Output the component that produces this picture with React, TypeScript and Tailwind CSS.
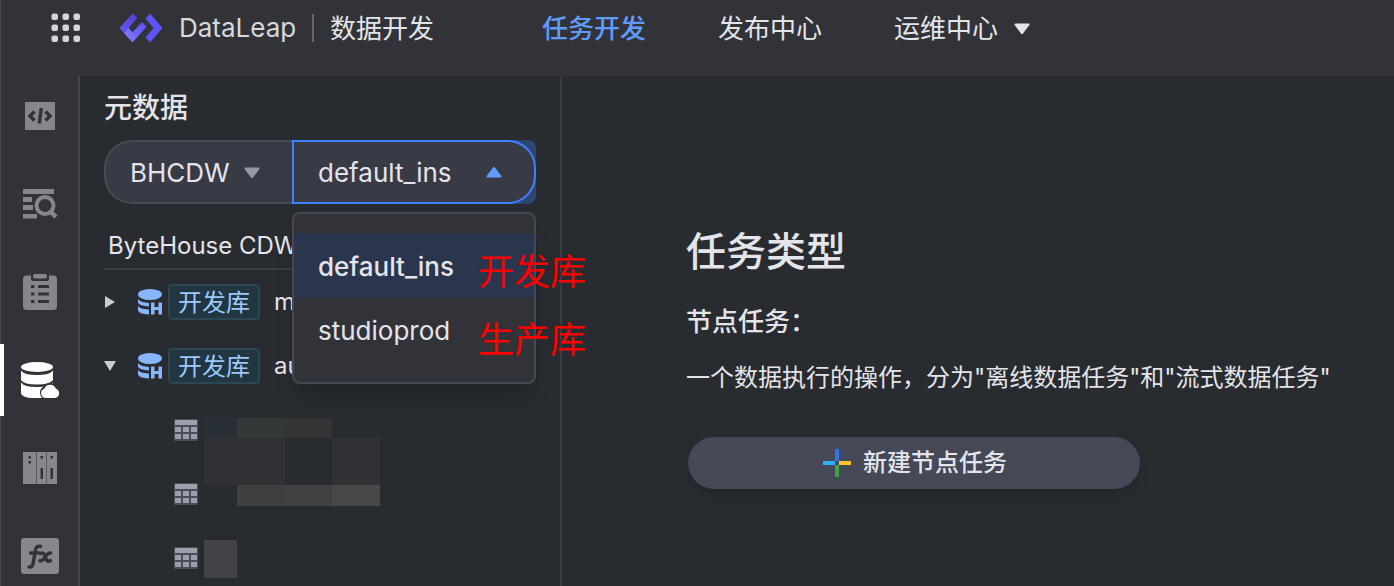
import { useState } from "react"

const AppsIcon = () => (
  <svg width="30" height="30" viewBox="0 0 30 30" fill="#d5d6da">
    {[0, 11, 22].map((y) => [0, 11, 22].map((x) => <rect key={`${x}-${y}`} x={x + 0.5} y={y + 0.5} width="6.5" height="6.5" rx="2" />))}
  </svg>
)

const Logo = () => (
  <svg width="44" height="30" viewBox="0 0 44 30">
    <defs>
      <linearGradient id="logoTop" x1="0" y1="1" x2="1" y2="0">
        <stop offset="0" stopColor="#6558f5" />
        <stop offset="1" stopColor="#5043d2" />
      </linearGradient>
      <linearGradient id="logoBottom" x1="0" y1="1" x2="1" y2="0">
        <stop offset="0" stopColor="#8c83fa" />
        <stop offset="0.5" stopColor="#6f64fa" />
        <stop offset="1" stopColor="#5b4bf5" />
      </linearGradient>
    </defs>
    <path d="M0.5 15 13.5 0.5 18.5 5 9.5 15 13.5 19.5 9 24.5Z" fill="url(#logoTop)" />
    <path d="M5 20 9.3 14.8 13.5 19.3 23 9 27.5 13.8 13.5 29.5Z" fill="url(#logoBottom)" />
    <path d="M31 0.5 43.5 15 31 29.5 26.5 24.5 34.5 15 26.5 5.5Z" fill="#6052f9" />
  </svg>
)

const Caret = ({ className = "" }) => (
  <svg width="16" height="12" viewBox="0 0 16 12" className={className} fill="currentColor">
    <path d="M1.5 0.5h13c1 0 1.3 1 .7 1.7L9 10.6c-.5.7-1.5.7-2 0L.8 2.2C.2 1.5.5.5 1.5.5Z" />
  </svg>
)

const CodeIcon = () => (
  <svg width="40" height="40" viewBox="0 0 40 40">
    <path d="M5 6h30v28H5z" fill="#86878b" />
    <path d="M14.5 15.5 10 20l4.500 4.500M25.500 15.500l4.500 4.500-4.500 4.500" fill="none" stroke="#323338" strokeWidth="3.500" />
    <path d="M21.300 12 19.300 27.500" stroke="#323338" strokeWidth="3.500" />
  </svg>
)

const SearchListIcon = () => (
  <svg width="40" height="40" viewBox="0 0 40 40">
    <path d="M3 5h31v5H3zM3 13h9v5H3zM3 21h10v5H3zM3 30h14v4.500H3z" fill="#86878b" />
    <circle cx="25" cy="21.500" r="8.500" fill="none" stroke="#86878b" strokeWidth="4" />
    <path d="m30.500 27.500 5.500 5.500" stroke="#86878b" strokeWidth="4.500" />
  </svg>
)

const ClipboardIcon = () => (
  <svg width="40" height="40" viewBox="0 0 40 40">
    <rect x="3" y="3.500" width="34" height="34.500" rx="4" fill="#86878b" />
    <path d="M11 2h18v5q0 2-3 2H14q-3 0-3-2Z" fill="#323338" />
    <rect x="13" y="2" width="14" height="4.500" rx="2" fill="#86878b" />
    <path d="M11 13h3.500v3H11zM18 13h11v3H18zM11 20.500h3.500v3H11zM18 20.500h11v3H18zM11 28h3.500v3H11zM18 28h11v3H18z" fill="#323338" />
  </svg>
)

const DatabaseIcon = () => (
  <svg width="40" height="40" viewBox="0 0 40 40">
    <ellipse cx="17" cy="7" rx="16" ry="5" fill="#fff" />
    <path d="M1 10.500q3 4.500 16 4.500t16-4.500V20q-3 4.500-16 4.500T1 20Z" fill="#fff" />
    <path d="M1 22.500Q4 27 17 27t16-4.500V38H10Q1 36.500 1 33Z" fill="#fff" />
    <path d="M25.500 38a5.600 5.600 0 0 1-1.500-10 7 7 0 0 1 12 0 5.600 5.600 0 0 1-1 10Z" fill="#fff" stroke="#323338" strokeWidth="3" />
    <path d="M25.500 38a4.800 4.800 0 0 1-1.200-9.300 6.200 6.200 0 0 1 11.600 0 4.800 4.800 0 0 1-1 9.300Z" fill="#fff" />
    <path d="M1 38h38v2H1z" fill="#323338" />
  </svg>
)

const BinderIcon = () => (
  <svg width="40" height="40" viewBox="0 0 40 40">
    <path d="M3 4h34v32H3z" fill="#86878b" />
    <path d="M16.500 4v32M26.500 4v32" stroke="#5b5c60" />
    <path d="M8.500 8h2.500v2.500H8.500zM8.500 13h2.500v2.500H8.500zM20.500 8h2.500v2.500h-2.500zM30.500 8h2.500v2.500h-2.500zM20.500 20h2.500v11h-2.500zM30.500 20h2.500v11h-2.500z" fill="#323338" />
  </svg>
)

const FunctionIcon = () => (
  <svg width="40" height="40" viewBox="0 0 40 40">
    <rect x="1" y="2" width="38" height="36" rx="3" fill="#86878b" />
    <g fill="none" stroke="#323338" strokeWidth="3.500" strokeLinecap="round">
      <path d="M20.500 10.500q-4-1.500-5 3.500l-2.300 13q-.8 4.500-4.200 4M10.500 17h8.500" />
      <path d="M20.500 17.500q3-1.500 4.500 2.500l1 3q1.500 3.500 4.500 1.500M30.500 17q-2-.5-4.500 3l-2 2.500q-2 2.800-4 2.300" />
    </g>
  </svg>
)

const DbHIcon = () => (
  <svg width="26" height="26" viewBox="0 0 26 26" fill="#86b4ff">
    <ellipse cx="13" cy="5.500" rx="12" ry="5.500" />
    <path d="M1 10q2 3.500 11 4v3.500Q2 17 1 13.500ZM1 17q2 3 11 3.500V25.500Q2 25 1 21.500Z" />
    <path d="M14 13.500h3.500V18h4v-4.500H25v12h-3.500V21h-4v4.500H14z" />
  </svg>
)

const TableIcon = () => (
  <svg width="24" height="22" viewBox="0 0 24 22">
    <rect width="24" height="22" rx="1" fill="#484c57" />
    <path d="M1 1h22v5H1zM1 8h6v5H1zM9 8h6v5H9zM17 8h6v5h-6zM1 15h6v5H1zM9 15h6v5H9zM17 15h6v5h-6z" fill="#9aa0ae" />
  </svg>
)

const sideItems = [
  { label: "代码", icon: <CodeIcon /> },
  { label: "查询", icon: <SearchListIcon /> },
  { label: "任务", icon: <ClipboardIcon /> },
  { label: "元数据", icon: <DatabaseIcon />, active: true },
  { label: "资源", icon: <BinderIcon /> },
  { label: "函数", icon: <FunctionIcon /> },
]

const databases = [
  { name: "m", open: false },
  { name: "au", open: true },
]

const instances = ["default_ins", "studioprod"]

const maskColors = [
  "bg-[#272e35]", "bg-[#353839]", "bg-[#333436]", "bg-transparent",
  "bg-[#303134]", "bg-[#303134]", "bg-transparent", "bg-[#313235]",
  "bg-transparent", "bg-[#3f4042]", "bg-[#404143]", "bg-[#47484a]",
]

const Header = () => (
  <header className="flex h-19 shrink-0 items-center border-l border-[#46474b] bg-[#323338] pb-5 pl-[50px] text-[26px] leading-9 whitespace-nowrap text-[#e4e5ea]">
    <button aria-label="应用"><AppsIcon /></button>
    <div className="ml-[38px] flex items-center">
      <Logo />
      <span className="ml-4 w-[133px] text-[#d8d9dd]">DataLeap</span>
      <span className="h-7 w-0.5 bg-[#66676b]" />
      <span className="ml-4 pt-0.5">数据开发</span>
    </div>
    <nav className="ml-27 flex items-center gap-18 pt-0.5">
      <a href="#develop" className="font-medium text-[#619bff]">任务开发</a>
      <a href="#release">发布中心</a>
      <a href="#ops" className="flex items-center gap-4">
        运维中心
        <Caret />
      </a>
    </nav>
  </header>
)

const Sidebar = () => (
  <nav className="flex w-20 shrink-0 flex-col gap-4 border-r-2 border-[#45464a] bg-[#323338] pt-1 shadow-[inset_1px_0_0_#46474b]">
    {sideItems.map((item) => (
      <button
        key={item.label}
        aria-label={item.label}
        className={`flex h-18 shrink-0 items-center justify-center border-l-4 pr-[2px] ${item.active ? "border-white" : "border-transparent"}`}
      >
        {item.icon}
      </button>
    ))}
  </nav>
)

const InstancePicker = () => {
  const [open, setOpen] = useState(true)
  const [value, setValue] = useState(instances[0])

  return (
    <div className="relative w-61 rounded-r-lg bg-[#2d4674]">
      <button
        aria-haspopup="listbox"
        aria-expanded={open}
        onClick={() => setOpen(!open)}
        className="flex h-16 w-full items-center justify-between rounded-r-[28px] border-2 border-[#4181ff] bg-[#383b46] pr-8 pl-6"
      >
        {value}
        <Caret className="rotate-180 text-[#619bff]" />
      </button>
      {open && (
        <div className="absolute top-18 left-0 z-10 w-full rounded-lg border-2 border-[#434954] bg-[#323338] py-5 shadow-xl">
          <div role="listbox" aria-label="实例">
            {instances.map((name) => (
              <button
                key={name}
                role="option"
                aria-selected={name === value}
                onClick={() => setValue(name)}
                className={`flex h-16 w-full items-center pl-6 ${name === value ? "bg-[#2a354e] font-medium" : ""}`}
              >
                {name}
              </button>
            ))}
          </div>
          {/* Notes beside each option */}
          <div className="absolute top-8 left-46 flex flex-col gap-4 text-4xl leading-[52px] whitespace-nowrap text-[#ff0000]">
            <span>开发库</span>
            <span>生产库</span>
          </div>
        </div>
      )}
    </div>
  )
}

const MetaPanel = () => (
  <section className="w-[482px] shrink-0 border-r-2 border-[#393b3f] px-6 text-[#e4e5ea]">
    <h2 className="pt-3 text-[28px] leading-10 font-medium">元数据</h2>
    <div className="mt-3 flex text-[26px]">
      <div className="relative w-47">
        <select aria-label="引擎" className="h-16 w-full appearance-none rounded-l-[28px] border-2 border-r-0 border-[#454a55] bg-[#383b46] pl-6">
          <option>BHCDW</option>
        </select>
        <Caret className="pointer-events-none absolute top-[27px] right-8 text-[#9398a6]" />
      </div>
      <InstancePicker />
    </div>
    <div className="mt-6 border-b-2 border-[#3b3d40] pb-1 pl-1 text-2xl leading-9">ByteHouse CDW</div>
    <div className="relative">
      <ul className="text-2xl">
        {databases.map((db) => (
          <li key={db.name} className="flex h-16 items-center">
            <button aria-label={db.name} aria-expanded={db.open} className="flex w-3 justify-center text-[#c9ccd0]">
              <svg width="12" height="12" viewBox="0 0 12 12" fill="currentColor">
                <path d={db.open ? "M0 1h12L6 11Z" : "M1 0v12l10-6Z"} />
              </svg>
            </button>
            <span className="ml-[21px]"><DbHIcon /></span>
            <span className="ml-[5px] flex h-9 w-23 shrink-0 items-center justify-center rounded border-2 border-[#2d4654] bg-[#223642] pt-0.5 text-[#9cc8ff]">
              开发库
            </span>
            <span className="ml-3.5">{db.name}</span>
          </li>
        ))}
        {[1, 2, 3].map((n) => (
          <li key={n} className="flex h-16 items-center pl-[70px]"><TableIcon /></li>
        ))}
      </ul>
      {/* Masked table names */}
      <div className="absolute top-37 left-25">
        <div className="grid grid-cols-[33px_48px_47px_48px] grid-rows-[20px_47px_21px]">
          {maskColors.map((color, index) => (
            <div key={index} className={color}></div>
          ))}
        </div>
        <div className="mt-[34px] h-[38px] w-[33px] bg-[#424346]"></div>
      </div>
    </div>
  </section>
)

const Welcome = () => (
  <main className="min-w-0 flex-1 pt-37 pr-6 pl-31 text-[#e4e5ea]">
    <h1 className="text-[40px] leading-14 font-medium">任务类型</h1>
    <h2 className="mt-6 text-[26px] leading-9 font-medium">节点任务：</h2>
    <p className="mt-[18px] text-2xl leading-10">一个数据执行的操作，分为"离线数据任务"和"流式数据任务"</p>
    <button className="mx-0.5 mt-[39px] flex h-13 w-[452px] max-w-full items-center justify-center gap-3 rounded-full bg-[#444857] pl-0.5 text-2xl font-medium shadow-lg">
      <svg width="28" height="28" viewBox="0 0 28 28">
        <path d="M12 0h4v12h-4z" fill="#2f73f2" />
        <path d="M16 12h12v4H16z" fill="#ffc526" />
        <path d="M12 16h4v12h-4z" fill="#43a047" />
        <path d="M0 12h12v4H0z" fill="#2bb0ff" />
      </svg>
      新建节点任务
    </button>
  </main>
)

const App = () => {
  return (
    <div className="flex h-screen flex-col overflow-hidden bg-[#282b2f] font-['Inter','Noto_Sans_CJK_SC',sans-serif]">
      <Header />
      <div className="flex min-h-0 flex-1">
        <Sidebar />
        <MetaPanel />
        <Welcome />
      </div>
    </div>
  )
}

export default App
